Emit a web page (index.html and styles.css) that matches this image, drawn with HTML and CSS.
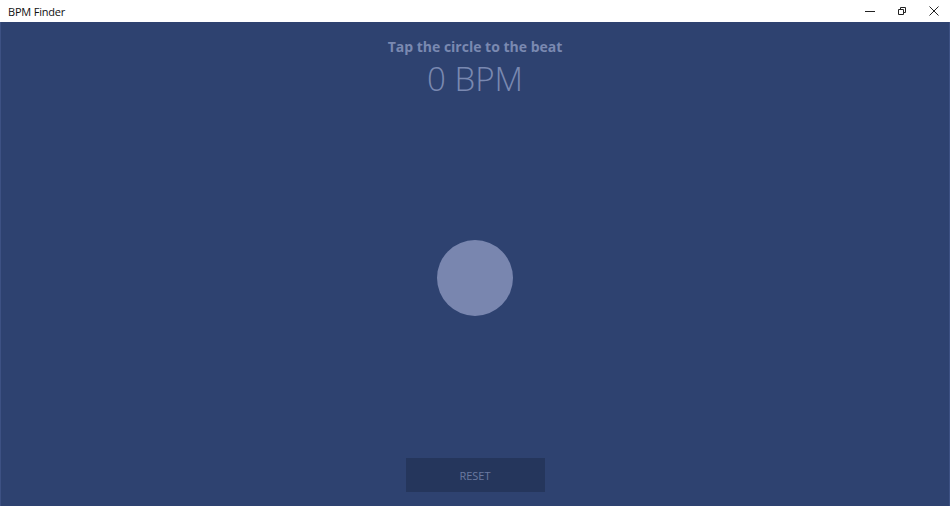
FILE: index.html
```html
<!DOCTYPE html>
<html>
<head>
<meta charset="utf-8">
<link rel="stylesheet" href="styles.css">
</head>
<body>
<div class="window">
  <div class="titlebar">
    <span class="title">BPM Finder</span>
    <div class="controls">
      <span class="ctl"><svg width="10" height="10" viewBox="0 0 10 10"><path d="M0 5.5H10" stroke="#222" stroke-width="1"/></svg></span>
      <span class="ctl"><svg width="10" height="10" viewBox="0 0 10 10"><path d="M1.5 3.5h5v5h-5z M3.5 3.5V1.5h5v5h-2" fill="none" stroke="#222" stroke-width="1"/></svg></span>
      <span class="ctl"><svg width="10" height="10" viewBox="0 0 10 10"><path d="M0.5 0.5L9.5 9.5M9.5 0.5L0.5 9.5" stroke="#222" stroke-width="1"/></svg></span>
    </div>
  </div>
  <main class="app">
    <div class="header">
      <div class="prompt">Tap the circle to the beat</div>
      <div class="bpm">0 BPM</div>
    </div>
    <div class="stage">
      <div class="tap"></div>
    </div>
    <button class="reset">RESET</button>
  </main>
</div>
</body>
</html>
```

FILE: styles.css
```css
html, body {
  margin: 0;
  padding: 0;
  width: 950px;
  height: 506px;
  overflow: hidden;
  font-family: "Open Sans", "Noto Sans", sans-serif;
}
.window {
  display: flex;
  flex-direction: column;
  height: 506px;
}
.titlebar {
  height: 22px;
  background: #ffffff;
  display: flex;
  align-items: center;
  justify-content: space-between;
  flex: none;
}
.title {
  font-size: 11px;
  color: #111;
  padding-left: 8px;
  letter-spacing: -0.2px;
}
.controls {
  display: flex;
  height: 22px;
}
.ctl {
  width: 32px;
  height: 22px;
  display: flex;
  align-items: center;
  justify-content: center;
}
.app {
  flex: 1;
  background: #2e4270;
  border-left: 1px solid #3d5183;
  border-right: 1px solid #3d5183;
  display: flex;
  flex-direction: column;
  align-items: center;
}
.header {
  padding-top: 15px;
  text-align: center;
  color: #7a89b1;
}
.prompt {
  font-size: 14px;
  font-weight: 700;
  line-height: 20px;
}
.bpm {
  font-size: 33px;
  font-weight: 300;
  line-height: 42px;
  margin-top: 1px;
}
.stage {
  flex: 1;
  display: flex;
  align-items: center;
  justify-content: center;
  padding-bottom: 2px;
}
.tap {
  width: 76px;
  height: 76px;
  border-radius: 50%;
  background: #7986af;
}
.reset {
  width: 139px;
  height: 34px;
  margin-bottom: 14px;
  background: #25365c;
  border: none;
  color: #6b7aa1;
  font-family: "Open Sans", sans-serif;
  font-size: 11px;
  padding: 0;
}
```
